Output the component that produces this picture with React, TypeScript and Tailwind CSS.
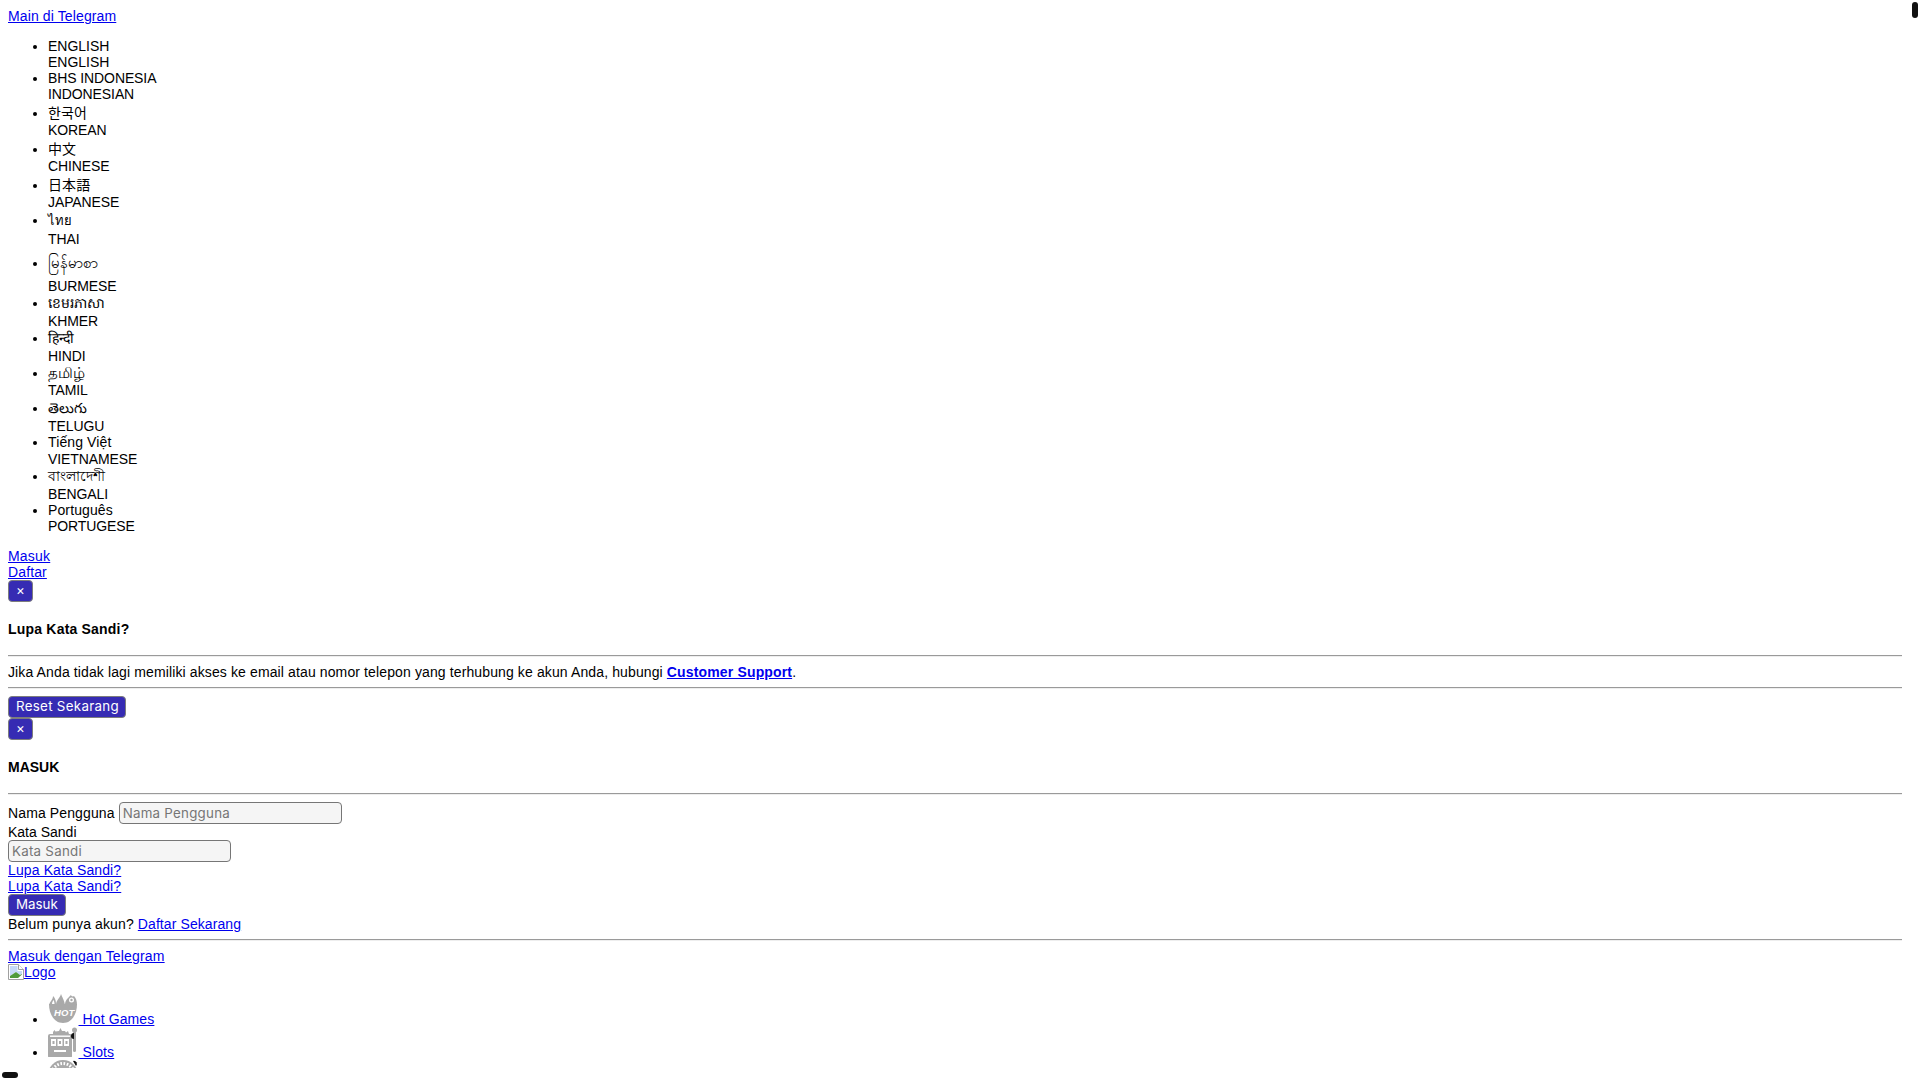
const hrCls = "box-content h-0 border-0 border-t border-b border-t-[#9a9a9a] border-b-[#eeeeee] my-[7px]";
const F = "font-['Liberation_Sans','Noto_Sans_CJK_KR','Noto_Sans_CJK_JP',sans-serif]";
const caps = "tracking-[-0.1px]";
const langs = [
  ["ENGLISH", "ENGLISH", "tracking-normal"],
  ["BHS INDONESIA", "INDONESIAN", caps],
  ["한국어", "KOREAN", ""],
  ["中文", "CHINESE", ""],
  ["日本語", "JAPANESE", ""],
  ["ไทย", "THAI", "h-[21px] leading-[21px] text-[13px]"],
  ["မြန်မာစာ", "BURMESE", "h-[31px] leading-[31px] text-[15px]"],
  ["ខេមរភាសា", "KHMER", "h-[19px] leading-[19px]"],
  ["हिन्दी", "HINDI", "h-[19px] leading-[19px]"],
  ["தமிழ்", "TAMIL", "h-[18px] leading-[18px] text-[15px]"],
  ["తెలుగు", "TELUGU", "h-[20px] leading-[20px]"],
  ["Tiếng Việt", "VIETNAMESE", "h-[17px] leading-[17px]"],
  ["বাংলাদেশী", "BENGALI", "h-[19px] leading-[19px]"],
  ["Português", "PORTUGESE", "h-[16px] leading-[16px]"],
];
const link = "text-[#0000ee] underline";
const btnBase = "block box-border h-[22px] rounded-[4px] border border-[#7d7d7d] bg-[#362bb3] text-white text-[13.33px] leading-none font-['Inter',sans-serif]";
const btn = `${btnBase} px-[7px] tracking-normal`;
const wideBtn = `${btnBase} pl-[7px] pr-[6px] tracking-[0.3px]`;
const closeBtn = `${btnBase} w-[25px] tracking-normal`;
const input = "box-border w-[223px] h-[22px] rounded-[4px] border border-[#767676] bg-[#f5f5f5] px-[3px] text-[13.33px] tracking-[0.25px] font-['Inter',sans-serif] placeholder:text-[#757575]";

function Hot() {
  return (
    <svg viewBox="0 0 30 30" preserveAspectRatio="xMinYMid meet" className="inline h-[30px] w-[30.5px] align-baseline">
      <g fill="#a9a9a9">
        <path d="M1 10h28c0 10-5 19-14 19S1 20 1 10z" />
        <path d="M1 11C2 7 5 6 5 2c2 2 3 4 3 9z" />
        <path d="M8 11C8 6 12 4 13 0c1 3 3 5 4 11z" />
        <path d="M17 11c0-5 3-7 6-10 0 1 2 2 3 1 2 2 3 5 3 9z" />
      </g>
      <path fill="#fff" d="M4 10c0-2 1-3 1.5-4 .8 1 1 3 1 4z" />
      <circle cx="23.5" cy="6" r="2.5" fill="#fff" />
      <circle cx="23.5" cy="6" r="1.2" fill="#a9a9a9" />
      <text x="6" y="22" fontSize="9.5" fontWeight="700" fontStyle="italic" fill="#fff" fontFamily="Liberation Sans">HOT</text>
    </svg>
  );
}
function SlotIcon() {
  return (
    <svg viewBox="0 0 30 30" preserveAspectRatio="xMinYMid meet" className="inline h-[30px] w-[30.5px] align-baseline">
      <g fill="#a9a9a9">
        <path d="M5 5l1.5-2 1 1.5L11 4l1.5-3L14 4l3 0 1 1.5L20 4l1 3H5z" />
        <rect x="0" y="7" width="24" height="24" rx="2" />
        <rect x="25" y="4" width="3" height="21" rx="1.5" />
        <circle cx="26.5" cy="3" r="2.5" />
      </g>
      <g fill="#fff">
        <rect x="2" y="8.5" width="20" height="1.4" />
        <rect x="3" y="12" width="5" height="7" />
        <rect x="9.5" y="12" width="5" height="7" />
        <rect x="16" y="12" width="5" height="7" />
        <rect x="6" y="23" width="12" height="2" />
      </g>
      <g fill="#a9a9a9">
        <rect x="4.5" y="14" width="2" height="3" />
        <rect x="11" y="14" width="2" height="3" />
        <rect x="17.5" y="14" width="2" height="3" />
      </g>
      <path d="M26 6a2.5 2.5 0 0 0 0 6z" fill="#111" />
    </svg>
  );
}
function Wheel() {
  return (
    <svg viewBox="0 0 30 30" className="inline h-[30px] w-[30px] align-baseline">
      <circle cx="15" cy="15" r="15" fill="#a9a9a9" />
      <circle cx="15" cy="15" r="11.5" fill="none" stroke="#fff" strokeWidth="3" strokeDasharray="1.6 1.6" />
      <path d="M25 1a3 3 0 0 1 3 5z" fill="#111" />
    </svg>
  );
}
function Broken() {
  return (
    <svg viewBox="0 0 16 16" className="inline h-4 w-4 align-[-3px]">
      <path d="M.5.5h10l5 5v10H.5z" fill="#fff" stroke="#a0a0a0" />
      <path d="M10.5.5v5h5" fill="#fff" stroke="#a0a0a0" />
      <path d="M2 2h7.5v5H14v3L12 11 8 8 2 12z" fill="#c6d9f7" />
      <path d="M2 14v-2l6-4 4 3 2-1v.5L10 14z" fill="#4f9a3a" />
    </svg>
  );
}

export default function App() {
  return (
    <div className={`relative h-[1080px] w-full overflow-hidden bg-white text-[14px] leading-[normal] tracking-[0.12px] text-black ${F}`}>
      <div className="h-[1068px] w-[1910px] overflow-hidden p-2">
        <a className={`${link} block`} href="#">Main di Telegram</a>
        <ul className="my-[14px] list-disc pl-10">
          {langs.map(([a, b, c]) => (
            <li key={b}>
              <div className={c}>{a}</div>
              <div className={a === b ? "tracking-normal" : caps}>{b}</div>
            </li>
          ))}
        </ul>
        <a className={`${link} block tracking-[0.2px]`} href="#">Masuk</a>
        <a className={`${link} block`} href="#">Daftar</a>
        <button className={closeBtn}>×</button>
        <h5 className="mt-[19px] mb-[18px] text-[14px] font-bold tracking-[0.2px]">Lupa Kata Sandi?</h5>
        <hr className={hrCls} />
        <p>Jika Anda tidak lagi memiliki akses ke email atau nomor telepon yang terhubung ke akun Anda, hubungi <a className={`${link} font-bold tracking-[0.15px]`} href="#">Customer Support</a>.</p>
        <hr className={hrCls} />
        <button className={wideBtn}>Reset Sekarang</button>
        <button className={closeBtn}>×</button>
        <h5 className="mt-[19px] mb-[18px] text-[14px] font-bold tracking-normal">MASUK</h5>
        <hr className={hrCls} />
        <div className="h-[22px]">Nama Pengguna <input className={input} placeholder="Nama Pengguna" /></div>
        <div className="tracking-normal">Kata Sandi</div>
        <input className={`${input} block`} placeholder="Kata Sandi" />
        <a className={`${link} block`} href="#">Lupa Kata Sandi?</a>
        <a className={`${link} block`} href="#">Lupa Kata Sandi?</a>
        <button className={btn}>Masuk</button>
        <div>Belum punya akun? <a className={`${link} tracking-[0.09px]`} href="#">Daftar Sekarang</a></div>
        <hr className={hrCls} />
        <a className={`${link} block tracking-[0.17px]`} href="#">Masuk dengan Telegram</a>
        <a className={`${link} block`} href="#"><Broken />Logo</a>
        <ul className="my-[14px] list-disc pl-10">
          <li><a className={link} href="#"><Hot /> Hot Games</a></li>
          <li><a className={link} href="#"><SlotIcon /> Slots</a></li>
          <li><a className={link} href="#"><Wheel /></a></li>
        </ul>
      </div>
      <div className="absolute right-[2px] top-[2px] h-4 w-[6px] rounded-[3px] bg-[#111]" />
      <div className="absolute bottom-[2px] left-[2px] h-[6px] w-4 rounded-[3px] bg-[#111]" />
    </div>
  );
}
